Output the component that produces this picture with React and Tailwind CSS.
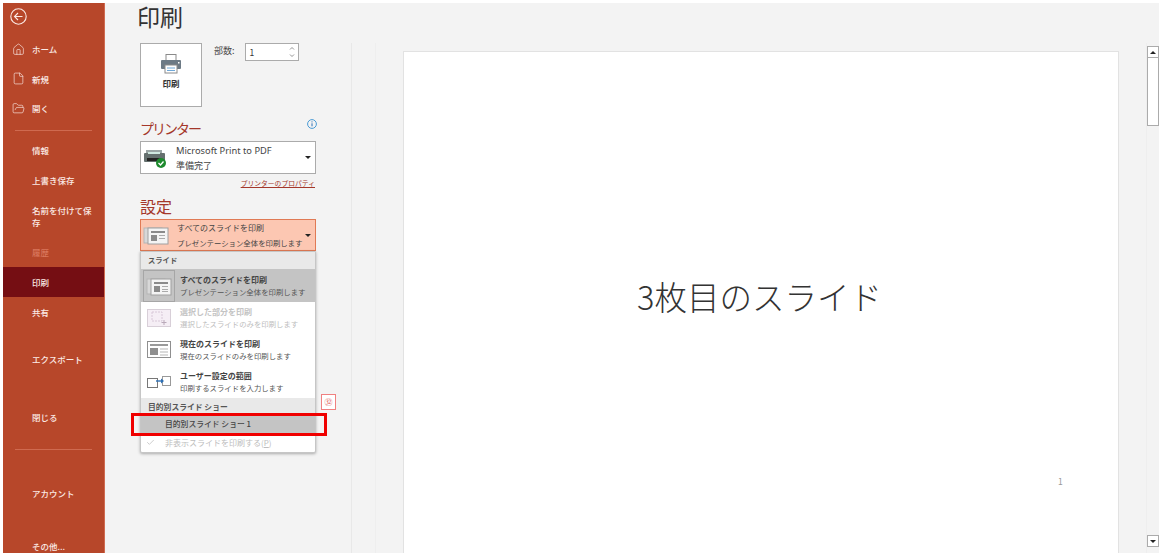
import { House, File, FolderOpen, Check } from "lucide-react";

const jp = "font-['Noto_Sans_CJK_JP','Noto_Sans',sans-serif]";

const Caret = () => <div className="w-0 h-0 shrink-0 border-x-[3px] border-x-transparent border-t-[3px] border-t-[#222]" />;

const NavItem = ({ icon, label, className = "" }) => (
  <div className={`flex items-center pl-[9px] pr-2 text-[8.5px] leading-[12px] font-medium text-[#fbeae5] ${className}`}>
    <span className="w-[20px] shrink-0 flex">{icon}</span>
    <span>{label}</span>
  </div>
);

const Divider = ({ className = "" }) => <div className={`mx-3 h-px shrink-0 bg-[#cf6a50] ${className}`} />;

const SlideIcon = ({ active }) => (
  <svg className="shrink-0" width="26" height="20" viewBox="0 0 26 20" fill="none">
    <rect x="1" y="3" width="18" height="15" fill="#d8d8d8" stroke="#b5b5b5" />
    <rect x="5" y="3" width="20" height="16" fill="#f4f4f4" stroke="#a0a0a0" />
    <rect x="8" y="6" width="14" height="2" fill="#8a8a8a" />
    <rect x="8" y="10" width="6" height="6" fill="#8a8a8a" />
    <rect x="16" y="10" width="6" height="1" fill="#aaa" />
    <rect x="16" y="13" width="6" height="1" fill="#aaa" />
    {active && <rect x="16" y="15" width="6" height="1" fill="#aaa" />}
  </svg>
);

const SelectionIcon = () => (
  <svg className="shrink-0" width="24" height="20" viewBox="0 0 24 20" fill="none">
    <rect x="0.5" y="1.5" width="23" height="17" fill="#f5eef5" stroke="#d8cfd8" />
    <rect x="5" y="4" width="10" height="9" stroke="#d8c8d8" strokeDasharray="2 1" />
    <path d="M17 12v5M14.5 14.5h5" stroke="#b9a9b9" />
  </svg>
);

const CurrentIcon = () => (
  <svg className="shrink-0" width="24" height="20" viewBox="0 0 24 20" fill="none">
    <rect x="0.5" y="1.5" width="23" height="16" fill="#fff" stroke="#8f8f8f" />
    <rect x="3" y="4" width="18" height="2" fill="#9a9a9a" />
    <rect x="3" y="8" width="8" height="7" fill="#8f8f8f" />
    <path d="M13 9h8M13 12h8M13 15h8" stroke="#b5b5b5" />
  </svg>
);

const RangeIcon = () => (
  <svg className="shrink-0" width="24" height="14" viewBox="0 0 24 14" fill="none">
    <rect x="0.5" y="3.5" width="10" height="9" fill="#fff" stroke="#777" />
    <rect x="15.5" y="1.5" width="8" height="9" fill="#fff" stroke="#999" />
    <path d="M9 6h7" stroke="#2b6fb5" strokeWidth="1.4" />
    <path d="M14 3.5 17 6l-3 2.5z" fill="#2b6fb5" />
  </svg>
);

const MenuRow = ({ icon, title, sub, active, disabled }) => (
  <div className={`flex items-center pl-0.5 ${active ? "h-[33px] bg-[#c4c4c4]" : "h-[32px]"}`}>
    <div className={`w-[32px] h-[32px] flex items-center justify-center shrink-0 ${active ? "border border-[#a6a6a6]" : ""}`}>{icon}</div>
    <div className={`ml-[5px] text-[7.4px] leading-[12px] whitespace-nowrap ${disabled ? "text-[#bdbdbd]" : "text-[#555]"}`}>
      <div className={`text-[8px] font-bold ${disabled ? "text-[#c4c4c4]" : "text-[#444]"}`}>{title}</div>
      <div>{sub}</div>
    </div>
  </div>
);

const PrintDropdown = () => (
  <div className="absolute left-[35px] top-[248px] w-[176px] h-[202px] bg-white border border-[#c6c6c6] rounded-b-[2px] shadow-[0_1px_3px_rgba(0,0,0,0.3)] z-10">
    <div className="h-[17px] bg-[#e9e9e9] flex items-center pl-[7px] text-[7.3px] font-bold text-[#555]">スライド</div>
    <MenuRow active icon={<SlideIcon active />} title="すべてのスライドを印刷" sub="プレゼンテーション全体を印刷します" />
    <MenuRow disabled icon={<SelectionIcon />} title="選択した部分を印刷" sub="選択したスライドのみを印刷します" />
    <MenuRow icon={<CurrentIcon />} title="現在のスライドを印刷" sub="現在のスライドのみを印刷します" />
    <MenuRow icon={<RangeIcon />} title="ユーザー設定の範囲" sub="印刷するスライドを入力します" />
    <div className="h-[16px] bg-[#e9e9e9] flex items-center pt-[2px] pl-[7px] text-[7.8px] font-bold text-[#555]">目的別スライド ショー</div>
    <div className="h-[19px] bg-[#c4c4c4] flex items-center pl-[24px] text-[7.8px] font-medium text-[#444]">目的別スライド ショー 1</div>
    <div className="h-[19px] flex items-center pl-[5px] text-[8px] text-[#bdbdbd]">
      <Check size={9} className="text-[#bdbdbd] mr-[10px]" />
      <span>非表示スライドを印刷する(<span className="underline">P</span>)</span>
    </div>
  </div>
);

export default function App() {
  return (
    <div className={`w-[1163px] h-[553px] bg-white pt-[3px] pl-[3px] pr-[4px] overflow-hidden ${jp}`}>
      <div className="h-[550px] flex">
        {/* left nav */}
        <div className="w-[102px] shrink-0 bg-[#b7472a] border-r border-[#cf6a50] flex flex-col overflow-hidden">
          <div className="pl-[7px] pt-[5px] h-[34px] shrink-0">
            <svg width="17" height="17" viewBox="0 0 17 17" fill="none" stroke="#fbeae5" strokeWidth="1.1">
              <circle cx="8.5" cy="8.5" r="7.7" />
              <path d="M12.5 8.5H4.5M8 5 4.5 8.5 8 12" />
            </svg>
          </div>
          <NavItem className="h-[24px] shrink-0" icon={<House size={13} strokeWidth={1.2} />} label="ホーム" />
          <NavItem className="h-[29px] shrink-0 mt-[3px]" icon={<File size={13} strokeWidth={1.2} />} label="新規" />
          <NavItem className="h-[30px] shrink-0" icon={<FolderOpen size={13} strokeWidth={1.2} />} label="開く" />
          <Divider className="mt-[7px]" />
          <NavItem className="h-[30px] shrink-0 mt-[4px]" label="情報" />
          <NavItem className="h-[30px] shrink-0" label="上書き保存" />
          <NavItem className="h-[42px] shrink-0" label="名前を付けて保存" />
          <NavItem className="h-[30px] shrink-0 !text-[#d9765c]" label="履歴" />
          <NavItem className="h-[30px] shrink-0 bg-[#750e13]" label="印刷" />
          <NavItem className="h-[30px] shrink-0" label="共有" />
          <NavItem className="h-[30px] shrink-0 mt-[17px]" label="エクスポート" />
          <NavItem className="h-[30px] shrink-0 mt-[28px]" label="閉じる" />
          <Divider className="mt-[17px]" />
          <NavItem className="h-[30px] shrink-0 mt-[28px]" label="アカウント" />
          <NavItem className="h-[30px] shrink-0 mt-[23px]" label="その他..." />
        </div>

        {/* print options + preview */}
        <div className="relative flex-1 min-w-0 flex bg-[#f3f3f3]">
          <div className="w-[246px] shrink-0 pl-[35px] pr-[35px]">
            <div className="pt-[1px] text-[23px] leading-[24px] text-[#333] -ml-[3px]">印刷</div>
            <div className="flex mt-[15px] gap-[12px]">
              <div className="w-[62px] h-[64px] shrink-0 bg-white border border-[#ababab] flex flex-col items-center pt-[10px]">
                <svg width="22" height="20" viewBox="0 0 22 20" fill="none">
                  <rect x="6" y="0.5" width="10" height="6" fill="#fff" stroke="#8a8a8a" />
                  <rect x="1" y="6" width="20" height="9" rx="1" fill="#6d7a85" />
                  <rect x="5" y="11" width="12" height="8" fill="#fff" stroke="#8a8a8a" />
                  <path d="M7 14h8M7 16.5h8" stroke="#6fa8d8" />
                  <rect x="18" y="8" width="1.5" height="1.5" fill="#fff" />
                </svg>
                <div className="mt-[3px] text-[8.5px] font-bold text-[#333]">印刷</div>
              </div>
              <div className="flex items-start gap-[10px]">
                <div className="text-[9px] leading-[16px] text-[#444] whitespace-nowrap">部数:</div>
                <div className="w-[54px] h-[18px] bg-white border border-[#ababab] flex items-center justify-between pl-[4px] pr-[3px] text-[8.5px] text-[#333]">
                  <span>1</span>
                  <svg width="6" height="12" viewBox="0 0 6 12" fill="none" stroke="#777" strokeWidth="0.8">
                    <path d="M1 3.5 3 1.5 5 3.5M1 8.5 3 10.5 5 8.5" />
                  </svg>
                </div>
              </div>
            </div>

            <div className="mt-[10px] flex items-start justify-between">
              <div className="text-[14px] leading-[22px] tracking-[-2px] text-[#a4372a]">プリンター</div>
              <svg className="mt-[2px] -mr-[1px]" width="10" height="10" viewBox="0 0 10 10" fill="none">
                <circle cx="5" cy="5" r="4.4" stroke="#4a9ad4" />
                <path d="M5 4.3v3M5 2.4v1" stroke="#2b6fb5" />
              </svg>
            </div>
            <div className="mt-[2px] w-[176px] h-[33px] bg-white border border-[#ababab] flex items-center pl-[2px] pr-[4px]">
              <svg className="shrink-0" width="24" height="24" viewBox="0 0 24 24" fill="none">
                <rect x="3" y="4" width="16" height="4" fill="#9aa5a5" />
                <rect x="1" y="7" width="21" height="9" rx="1" fill="#65706f" />
                <rect x="4" y="12" width="14" height="3" fill="#222" />
                <rect x="5" y="6" width="12" height="2" fill="#cfe8e0" />
                <circle cx="18" cy="17" r="5" fill="#1e8a2e" />
                <path d="m15.5 17 2 2 3-3.5" stroke="#fff" strokeWidth="1.3" />
              </svg>
              <div className="ml-[9px] flex-1 text-[9px] leading-[15px] text-[#444]">
                <div className="font-['Noto_Sans',sans-serif] text-[9.3px]">Microsoft Print to PDF</div>
                <div>準備完了</div>
              </div>
              <Caret />
            </div>
            <div className="mt-[2px] w-[175px] text-right text-[6.8px] leading-[14px] text-[#a4372a] underline">プリンターのプロパティ</div>

            <div className="mt-[5px] text-[16px] leading-[22px] text-[#a4372a]">設定</div>
            <div className="mt-[2px] w-[176px] h-[32px] bg-[#fcc7b2] border border-[#e07a55] flex items-center pl-[2px] pr-[4px]">
              <SlideIcon />
              <div className="ml-[8px] flex-1 text-[7.4px] leading-[15px] text-[#444] whitespace-nowrap">
                <div className="text-[8px]">すべてのスライドを印刷</div>
                <div>プレゼンテーション全体を印刷します</div>
              </div>
              <Caret />
            </div>
          </div>
          <div className="w-px shrink-0 mt-[40px] bg-[#e8e8e8]" />

          <PrintDropdown />

          {/* red annotation over the dropdown */}
          <div className="absolute left-[26px] top-[410px] w-[196px] h-[23px] border-[3px] border-[#f00000] z-20" />
          <div className="absolute left-[216px] top-[391px] w-[15px] h-[16px] bg-white border border-[#f08080] text-[#e06060] text-[8px] leading-[14px] text-center">㉜</div>

          {/* slide preview */}
          <div className="flex-1 min-w-0 flex pl-[23px]">
            <div className="flex-1 min-w-0 flex mt-[40px] pl-[27px] pt-[8px] border-l border-r border-[#eeeeee]">
              <div className="w-[716px] h-[502px] bg-white border border-[#e2e2e2] border-b-0 shrink-0 relative flex justify-center pt-[222px] pr-[3px]">
                <div className="text-[32.5px] leading-[44px] text-[#333] font-light">3枚目のスライド</div>
                <div className="absolute left-[654px] top-[423px] text-[8.5px] text-[#999]">1</div>
              </div>
            </div>
          </div>

          {/* scrollbar */}
          <div className="w-[12px] shrink-0 flex flex-col pt-[43px] pb-[6px]">
            <div className="h-[12px] bg-white border border-[#ababab] flex items-center justify-center">
              <div className="w-0 h-0 border-x-[3px] border-x-transparent border-b-[3px] border-b-[#222]" />
            </div>
            <div className="h-[68px] bg-white border border-[#ababab] border-t-0" />
            <div className="flex-1" />
            <div className="h-[12px] bg-white border border-[#ababab] flex items-center justify-center">
              <Caret />
            </div>
          </div>
        </div>
      </div>
    </div>
  );
}
